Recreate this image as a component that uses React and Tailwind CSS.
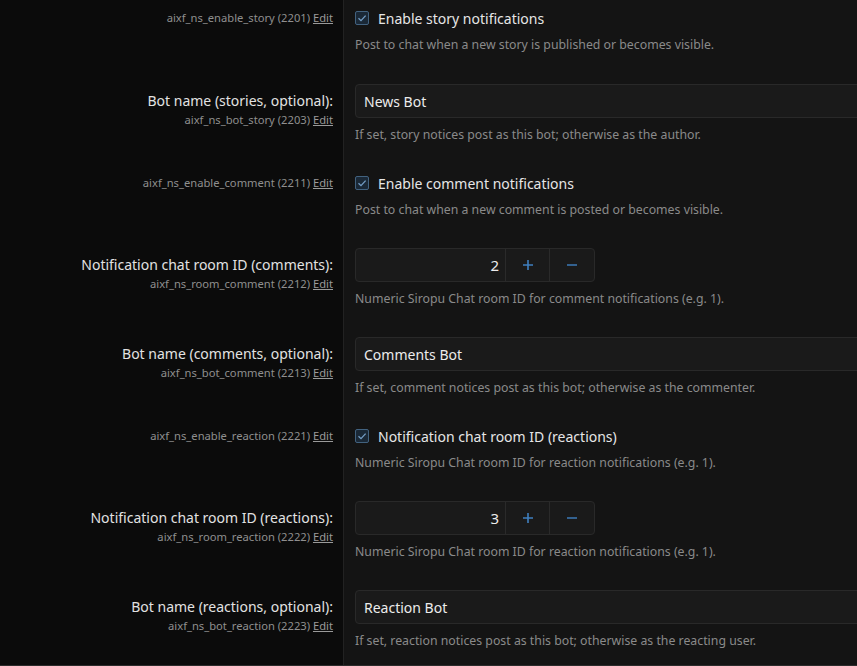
import React from 'react';

const rows = [
  { type: 'check', hint: 'aixf_ns_enable_story (2201)', label: 'Enable story notifications', desc: 'Post to chat when a new story is published or becomes visible.', first: true },
  { type: 'text', title: 'Bot name (stories, optional):', hint: 'aixf_ns_bot_story (2203)', value: 'News Bot', desc: 'If set, story notices post as this bot; otherwise as the author.' },
  { type: 'check', hint: 'aixf_ns_enable_comment (2211)', label: 'Enable comment notifications', desc: 'Post to chat when a new comment is posted or becomes visible.' },
  { type: 'number', title: 'Notification chat room ID (comments):', hint: 'aixf_ns_room_comment (2212)', value: '2', desc: 'Numeric Siropu Chat room ID for comment notifications (e.g. 1).' },
  { type: 'text', title: 'Bot name (comments, optional):', hint: 'aixf_ns_bot_comment (2213)', value: 'Comments Bot', desc: 'If set, comment notices post as this bot; otherwise as the commenter.' },
  { type: 'check', hint: 'aixf_ns_enable_reaction (2221)', label: 'Notification chat room ID (reactions)', desc: 'Numeric Siropu Chat room ID for reaction notifications (e.g. 1).' },
  { type: 'number', title: 'Notification chat room ID (reactions):', hint: 'aixf_ns_room_reaction (2222)', value: '3', desc: 'Numeric Siropu Chat room ID for reaction notifications (e.g. 1).' },
  { type: 'text', title: 'Bot name (reactions, optional):', hint: 'aixf_ns_bot_reaction (2223)', value: 'Reaction Bot', desc: 'If set, reaction notices post as this bot; otherwise as the reacting user.', last: true },
];

function Hint({ text }) {
  return (
    <div className="text-[11.2px] leading-[16px] text-[#8f8f8f]">
      {text} <span className="underline text-[#9a9a9a]">Edit</span>
    </div>
  );
}

function CheckBox() {
  return (
    <svg width="14" height="14" viewBox="0 0 14 14" className="shrink-0">
      <rect x="0.5" y="0.5" width="13" height="13" rx="1.5" fill="#1a2836" stroke="#42627f" />
      <path d="M3.5 7.2 L6 9.6 L10.6 4.6" fill="none" stroke="#739dc4" strokeWidth="1.3" />
    </svg>
  );
}

function Row({ row }) {
  const isCheck = row.type === 'check';
  let pad = isCheck ? 'pt-[17px] pb-[14px]' : 'pt-[16px] pb-[14px]';
  if (row.first) pad = 'pt-[9px] pb-[15px]';
  if (row.last) pad = 'pt-[16px] pb-[16px]';
  return (
    <div className="flex">
      <div className={`w-[344px] shrink-0 border-r border-[#222222] pr-[10px] text-right ${pad}`}>
        {isCheck ? (
          <div className="pt-[1px]"><Hint text={row.hint} /></div>
        ) : (
          <div className="pt-[6px]">
            <div className="text-[14px] leading-[22px] text-[#e2e2e2]">{row.title}</div>
            <Hint text={row.hint} />
          </div>
        )}
      </div>
      <div className={`flex-1 pl-[11px] bg-[#141414] ${pad}`}>
        {isCheck && (
          <>
            <div className="flex items-center gap-[9px] h-[18px]">
              <CheckBox />
              <span className="text-[14px] text-[#e6e6e6]">{row.label}</span>
            </div>
            <div className="mt-[10px] text-[12.3px] leading-[16px] text-[#8a8a8a]">{row.desc}</div>
          </>
        )}
        {row.type === 'text' && (
          <>
            <div className="w-[560px] h-[34px] flex items-center px-[8px] rounded-[4px] border border-[#292929] bg-[#1a1a1a] text-[14px] text-[#ececec]">
              {row.value}
            </div>
            <div className="mt-[9px] text-[12.3px] leading-[16px] text-[#8a8a8a]">{row.desc}</div>
          </>
        )}
        {row.type === 'number' && (
          <>
            <div className="w-[240px] h-[34px] flex rounded-[4px] border border-[#292929] bg-[#1a1a1a]">
              <div className="flex-1 flex items-center justify-end pr-[6px] text-[15px] text-[#ececec]">{row.value}</div>
              <div className="w-[44px] flex items-center justify-center border-l border-[#2a2a2a]">
                <svg width="12" height="12" viewBox="0 0 12 12"><path d="M6 1v10M1 6h10" stroke="#3f7fbf" strokeWidth="1.6" /></svg>
              </div>
              <div className="w-[45px] flex items-center justify-center border-l border-[#2a2a2a]">
                <svg width="12" height="12" viewBox="0 0 12 12"><path d="M1 6h10" stroke="#3a73ad" strokeWidth="1.6" /></svg>
              </div>
            </div>
            <div className="mt-[9px] text-[12.3px] leading-[16px] text-[#8a8a8a]">{row.desc}</div>
          </>
        )}
      </div>
    </div>
  );
}

export default function App() {
  return (
    <div className="w-[857px] h-[666px] overflow-hidden bg-[#0b0b0b]" style={{ fontFamily: '"Noto Sans", "Open Sans", sans-serif' }}>
      {rows.map((r, i) => (
        <Row key={i} row={r} />
      ))}
      <div className="border-t border-[#2c2c2c] h-[10px] bg-[#101010]" />
    </div>
  );
}
